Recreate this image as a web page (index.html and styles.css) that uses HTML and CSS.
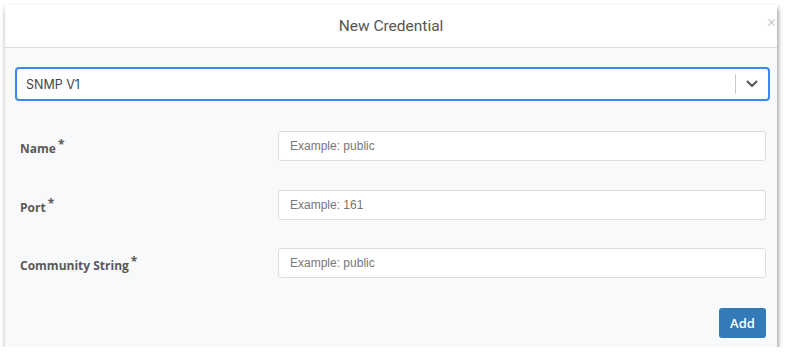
FILE: index.html
```
<!DOCTYPE html>
<html lang="en">
<head>
    <meta charset="UTF-8">
    <meta name="viewport" content="width=device-width, initial-scale=1.0">
    <title>New Credential</title>
    <link rel="stylesheet" href="styles.css">
</head>
<body>
    <div class="modal">
        <div class="modal-header">
            <h3>New Credential</h3>
            <span class="close">&times;</span>
        </div>
        <div class="modal-body">
            <div class="select">
                <span class="select-value">SNMP V1</span>
                <span class="select-sep"></span>
                <span class="select-arrow">
                    <svg width="12" height="8" viewBox="0 0 12 8"><path d="M1.5 1.5 L6 6 L10.5 1.5" fill="none" stroke="#555" stroke-width="2" stroke-linecap="round" stroke-linejoin="round"/></svg>
                </span>
            </div>

            <div class="fields">
                <div class="field">
                    <label>Name<sup>*</sup></label>
                    <input type="text" placeholder="Example: public">
                </div>
                <div class="field">
                    <label>Port<sup>*</sup></label>
                    <input type="text" placeholder="Example: 161">
                </div>
                <div class="field">
                    <label>Community String<sup>*</sup></label>
                    <input type="text" placeholder="Example: public">
                </div>
            </div>

            <div class="actions">
                <button class="btn-add">Add</button>
            </div>
        </div>
    </div>
</body>
</html>
```

FILE: styles.css
```
body {
    margin: 0;
    background-color: #ffffff;
    font-family: "Open Sans", sans-serif;
}

.modal {
    margin: 5px 0 0 5px;
    width: 772px;
    height: 342px;
    background-color: #f8f9fb;
    box-shadow: 1px 3px 5px rgba(0, 0, 0, 0.45);
    overflow: hidden;
    display: flex;
    flex-direction: column;
}

.modal-header {
    position: relative;
    height: 42px;
    flex-shrink: 0;
    background-color: #ffffff;
    border-bottom: 1px solid #dcdcdc;
    display: flex;
    align-items: center;
    justify-content: center;
}

.modal-header h3 {
    margin: 0;
    font-family: "Roboto", sans-serif;
    font-weight: 400;
    font-size: 15.5px;
    color: #555555;
}

.close {
    position: absolute;
    right: 1px;
    top: 9px;
    font-family: "Liberation Sans", sans-serif;
    font-size: 16px;
    color: #cccccc;
}

.modal-body {
    padding: 19px 7px 9px 10px;
    flex: 1;
    display: flex;
    flex-direction: column;
}

.select {
    height: 30px;
    border: 2px solid #3b86f0;
    border-radius: 4px;
    background-color: #ffffff;
    display: flex;
    align-items: center;
    padding-left: 9px;
}

.select-value {
    flex: 1;
    font-family: "Inter", sans-serif;
    font-size: 12.5px;
    color: #444444;
}

.select-sep {
    width: 1px;
    height: 20px;
    background-color: #cccccc;
}

.select-arrow {
    width: 32px;
    display: flex;
    justify-content: center;
    align-items: center;
}

.fields {
    display: flex;
    flex-direction: column;
    gap: 28.5px;
    margin-top: 30px;
    padding: 0 4px 0 5px;
}

.field {
    display: grid;
    grid-template-columns: 258px 1fr;
    align-items: center;
}

.field label {
    font-size: 12px;
    font-weight: 700;
    color: #595959;
    padding-top: 5px;
}

.field label sup {
    font-size: 12px;
    margin-left: 2px;
    vertical-align: 4px;
    line-height: 0;
}

.field input {
    height: 30px;
    box-sizing: border-box;
    border: 1px solid #dddddd;
    border-radius: 3px;
    background-color: #ffffff;
    padding: 0 11px;
    font-family: "Liberation Sans", sans-serif;
    font-size: 12px;
    color: #333333;
    outline: none;
}

.field input::placeholder {
    color: #777777;
}

.actions {
    margin-top: auto;
    display: flex;
    justify-content: flex-end;
    padding-right: 4px;
}

.btn-add {
    height: 30px;
    width: 47px;
    border: none;
    border-radius: 3px;
    background-color: #337ab7;
    color: #ffffff;
    font-family: "Open Sans", sans-serif;
    font-weight: 600;
    font-size: 13px;
    cursor: pointer;
}
```
